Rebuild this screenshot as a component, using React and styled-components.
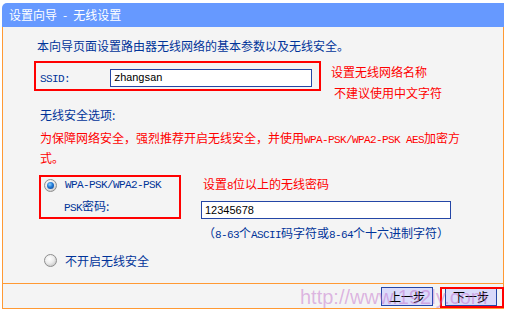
import React from 'react'
import styled, { createGlobalStyle, css } from 'styled-components'

const GlobalStyle = createGlobalStyle`
  html, body {
    margin: 0;
    padding: 0;
    background: #fff;
  }
  body {
    font-family: "Noto Sans CJK SC", sans-serif;
    font-size: 12px;
  }
`

const Blue = '#003399'
const Red = '#ff0000'
const Orange = '#ff9933'

const Page = styled.div`
  position: relative;
  width: 510px;
  height: 314px;
  padding: 3px 0 0 2px;
  box-sizing: border-box;
  overflow: hidden;
`
const Frame = styled.div`
  width: 502px;
`
const TitleBar = styled.div`
  height: 24px;
  line-height: 24px;
  padding-left: 7px;
  background: #6699ff;
  border-top-left-radius: 5px;
  color: #fff;
  white-space: pre;
`
const Body = styled.div`
  height: 256px;
  box-sizing: border-box;
  padding-top: 10px;
  background: #f4f4f4;
  border-left: 1px solid ${Orange};
  border-right: 1px solid ${Orange};
  color: ${Blue};
`
const Line = styled.div`
  line-height: 17px;
  white-space: nowrap;
  margin-left: ${({ left }) => left || 0}px;
  margin-top: ${({ top }) => top || 0}px;
  color: ${({ red }) => (red ? Red : 'inherit')};
`
const Lat = styled.span`
  font-family: "Liberation Mono", monospace;
  font-size: 11px;
  letter-spacing: -0.6px;
`
const SsidRow = styled.div`
  display: flex;
  align-items: flex-start;
  height: 30px;
  margin: 7px 0 0 31px;
`
const RedBox = styled.div`
  box-sizing: border-box;
  border: 2px solid ${Red};
  width: ${({ w }) => w}px;
  height: ${({ h }) => h}px;
`
const SsidBox = styled(RedBox)`
  display: flex;
  align-items: center;
  padding: 6px 0 2px 4px;
`
const FieldLabel = styled.span`
  width: 70px;
  line-height: 17px;
`
const TextInput = styled.div`
  box-sizing: border-box;
  width: ${({ w }) => w}px;
  height: 18px;
  padding-left: 3px;
  line-height: 16px;
  background: #fff;
  border: 1px solid #2446a6;
  color: #000;
  ${({ sans }) => (sans
    ? css`
      font-family: "Liberation Sans", Arial, sans-serif;
      font-size: 11px;
    `
    : css`
      font-family: "Liberation Mono", monospace;
      font-size: 11px;
      letter-spacing: -0.6px;
    `)}
`
const Notes = styled.div`
  margin: 2px 0 0 10px;
  color: ${Red};
  line-height: 17px;
`
const NoteLine = styled.div`
  padding-left: ${({ indent }) => indent || 0}px;
  margin-top: ${({ top }) => top || 0}px;
  white-space: nowrap;
`
const SecurityRow = styled.div`
  display: flex;
  align-items: flex-start;
  margin: 9px 0 0 36px;
`
const OptionBox = styled(RedBox)`
  padding-left: 3px;
`
const OptionRow = styled.div`
  display: flex;
  align-items: center;
  gap: 8px;
  height: 16px;
  line-height: 16px;
`
const PskRow = styled.div`
  margin-top: 5px;
  padding-left: 20px;
  line-height: 16px;
`
const Side = styled.div`
  margin-left: 20px;
  display: flex;
  flex-direction: column;
`
const SideNote = styled.div`
  color: ${Red};
  line-height: 17px;
  padding-left: 2px;
  margin-bottom: 6px;
`
const Hint = styled.div`
  margin-top: 5px;
  padding-left: 2px;
  line-height: 17px;
  white-space: nowrap;
`
const OffRow = styled(OptionRow)`
  margin: 8px 0 0 41px;
  height: 17px;
`
const Radio = styled.span`
  flex: none;
  display: inline-flex;
  align-items: center;
  justify-content: center;
  width: 13px;
  height: 13px;
  box-sizing: border-box;
  border-radius: 50%;
  border: 1px solid #8e8e8e;
  background: radial-gradient(circle at 40% 35%, #ffffff 0%, #ececec 45%, #b4b4b4 100%);
  ${({ checked }) => checked && css`
    &::after {
      content: '';
      width: 7px;
      height: 7px;
      border-radius: 50%;
      background: radial-gradient(circle at 40% 35%, #8fd4ff 0%, #1f78d6 45%, #0b3d86 100%);
    }
  `}
`
const Footer = styled.div`
  display: flex;
  justify-content: flex-end;
  align-items: flex-start;
  gap: 12px;
  height: 26px;
  box-sizing: border-box;
  padding: 3px 6px 0 0;
  background: #f4f4f4;
  border: 1px solid ${Orange};
`
const Button = styled.div`
  width: 52px;
  height: 19px;
  box-sizing: border-box;
  border: 1px solid #2446a6;
  background: #dadafa;
  color: #000;
  text-align: center;
  line-height: 17px;
`
const Marked = styled.div`
  position: relative;
  &::after {
    content: '';
    position: absolute;
    top: 0;
    left: -5px;
    right: -7px;
    bottom: -2px;
    border: 2px solid ${Red};
    pointer-events: none;
  }
`
const Watermark = styled.div`
  position: absolute;
  left: 300px;
  top: 287px;
  font-family: "Liberation Sans", Arial, sans-serif;
  font-size: 20px;
  line-height: 20px;
  color: rgba(190, 100, 200, 0.45);
  pointer-events: none;
  white-space: nowrap;
`

export default function App () {
  return (
    <>
      <GlobalStyle />
      <Page>
        <Frame>
          <TitleBar>设置向导{'\u2002'}-{'\u2002'}无线设置</TitleBar>
          <Body>
            <Line left={34}>本向导页面设置路由器无线网络的基本参数以及无线安全。</Line>
            <SsidRow>
              <SsidBox w={287} h={30}>
                <FieldLabel><Lat>SSID:</Lat></FieldLabel>
                <TextInput w={202}>zhangsan</TextInput>
              </SsidBox>
              <Notes>
                <NoteLine>设置无线网络名称</NoteLine>
                <NoteLine indent={3} top={4}>不建议使用中文字符</NoteLine>
              </Notes>
            </SsidRow>
            <Line left={37} top={15}>无线安全选项:</Line>
            <Line left={37} top={6} red>
              为保障网络安全，强烈推荐开启无线安全，并使用<Lat>WPA-PSK/WPA2-PSK AES</Lat>加密方<br />式。
            </Line>
            <SecurityRow>
              <OptionBox w={142} h={44}>
                <OptionRow>
                  <Radio checked />
                  <Lat>WPA-PSK/WPA2-PSK</Lat>
                </OptionRow>
                <PskRow><Lat>PSK</Lat>密码:</PskRow>
              </OptionBox>
              <Side>
                <SideNote>设置<Lat>8</Lat>位以上的无线密码</SideNote>
                <TextInput w={250} sans>12345678</TextInput>
                <Hint>（<Lat>8-63</Lat>个<Lat>ASCII</Lat>码字符或<Lat>8-64</Lat>个十六进制字符）</Hint>
              </Side>
            </SecurityRow>
            <OffRow>
              <Radio />
              <span>不开启无线安全</span>
            </OffRow>
          </Body>
          <Footer>
            <Button>上一步</Button>
            <Marked><Button>下一步</Button></Marked>
          </Footer>
        </Frame>
        <Watermark>http://www.192ly.com</Watermark>
      </Page>
    </>
  )
}
